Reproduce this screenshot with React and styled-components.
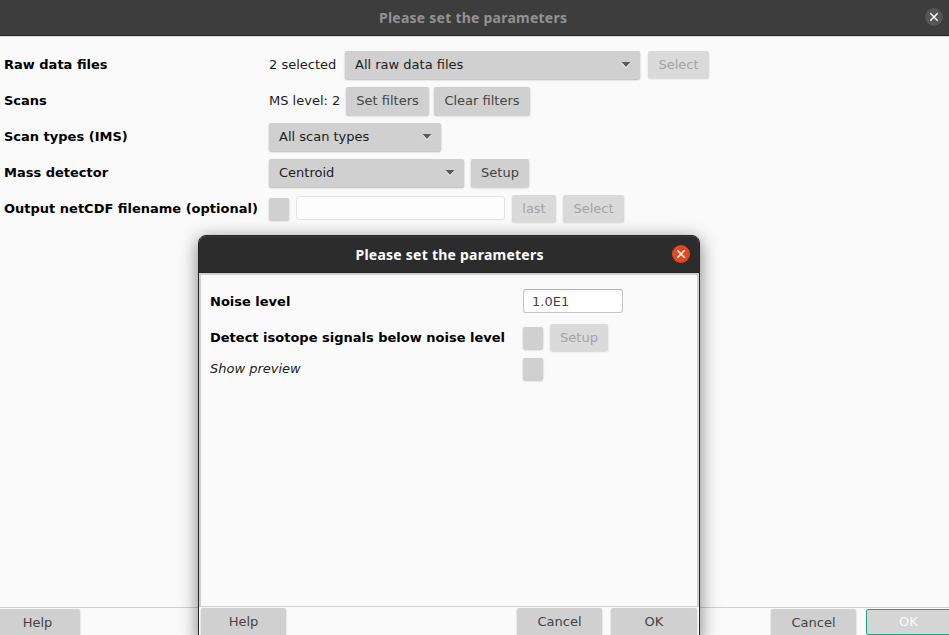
import React from "react";
import styled, { createGlobalStyle } from "styled-components";

const Global = createGlobalStyle`
  * { box-sizing: border-box; }
  html, body { margin: 0; height: 100%; overflow: hidden; }
  body { font: 13px/18px "DejaVu Sans", sans-serif; color: #1c1c1c; background: #fafafa; }
`;

const Window = styled.div`
  position: relative;
  display: flex;
  flex-direction: column;
  width: 949px;
  height: 635px;
  overflow: hidden;
  background: #fafafa;
`;

const TitleBar = styled.header`
  display: grid;
  grid-template-columns: 1fr auto 1fr;
  align-items: center;
  flex: none;
  height: ${(p) => (p.$active ? 37 : 36)}px;
  padding: ${(p) => (p.$active ? "0 9px 0 10px" : "0 6px 1px 3px")};
  background: ${(p) => (p.$active ? "#2c2c2c" : "#3d3d3d")};
  border-bottom: 1px solid #252525;
  box-shadow: ${(p) => (p.$active ? "inset 0 1px #393939" : "0 1px #d8d8d8")};
  border-radius: ${(p) => (p.$active ? "7px 7px 0 0" : "0")};
  color: ${(p) => (p.$active ? "#fff" : "#929292")};
`;

const Title = styled.h1`
  grid-column: 2;
  width: 188px;
  margin: 0;
  padding-top: 1px;
  font: 700 14px/20px "Noto Sans", sans-serif;
  letter-spacing: 0.24px;
  white-space: nowrap;
`;

const CloseButton = styled.button`
  grid-column: 3;
  justify-self: end;
  display: flex;
  align-items: center;
  justify-content: center;
  width: 18px;
  height: 18px;
  padding: 0;
  border: 0;
  border-radius: 50%;
  color: #fff;
  background: ${(p) => (p.$active ? "#e2491b" : "#555")};
`;

const Form = styled.main`
  flex: 1;
  padding: 11px 4px 0;
`;

const Row = styled.div`
  display: grid;
  grid-template-columns: ${(p) => p.$label || 265}px auto;
  align-items: center;
  height: ${(p) => p.$height || 36}px;
`;

const Label = styled.label`
  font-weight: ${(p) => (p.$italic ? 400 : 700)};
  font-style: ${(p) => (p.$italic ? "italic" : "normal")};
  color: ${(p) => (p.$italic ? "#222" : "#000")};
  white-space: nowrap;
`;

const Controls = styled.div`
  display: flex;
  align-items: center;
  gap: ${(p) => p.$gap || 7}px;
`;

const Value = styled.span`
  width: ${(p) => p.$width}px;
  white-space: nowrap;
`;

const Button = styled.button`
  flex: none;
  width: ${(p) => p.$width}px;
  height: ${(p) => (p.disabled ? 27 : 28)}px;
  margin: 0 0 ${(p) => (p.disabled ? 1 : 0)}px;
  padding: 0;
  border: 0;
  border-radius: 2px;
  font: inherit;
  color: ${(p) => (p.disabled ? "#a3a3a3" : "#444")};
  background: ${(p) => (p.disabled ? "#dadada" : "#d0d0d0")};
  box-shadow: 0 1px 2px rgba(0, 0, 0, ${(p) => (p.disabled ? 0.16 : 0.24)});
`;

const FocusedButton = styled(Button)`
  height: 26px;
  color: #fafafa;
  background: #d5d5d5;
  border: 1px solid #1da57f;
  box-shadow: none;
`;

const Dropdown = styled.button`
  display: flex;
  align-items: center;
  justify-content: space-between;
  width: ${(p) => p.$width}px;
  height: 28px;
  padding: 0 9px 0 10px;
  border: 0;
  border-radius: 2px;
  font: inherit;
  color: #1c1c1c;
  background: #d0d0d0;
  box-shadow: 0 1px 2px rgba(0, 0, 0, 0.28);
`;

const Checkbox = styled.span`
  width: 20px;
  height: 22px;
  border-radius: 2px;
  background: #d0d0d0;
  box-shadow: 0 1px 2px rgba(0, 0, 0, 0.24);
`;

const Field = styled.input`
  width: ${(p) => p.$width}px;
  height: 24px;
  margin: 0 0 2px;
  padding: 0 8px;
  border: 1px solid #c4c4c4;
  border-top-color: #b4b4b4;
  border-radius: 3px;
  font: inherit;
  color: #444;
  background: linear-gradient(#f6f6f6, #fff 4px);
  &:disabled { border-color: #e4e4e4; background: #fdfdfd; }
`;

const Footer = styled.footer`
  display: flex;
  flex: none;
  height: 28px;
  padding-top: 1px;
  border-top: 1px solid #cfcfcf;
`;

const Spacer = styled.div`
  flex: 1;
`;

const MainFooter = styled(Footer)`
  width: 956px;
  margin-left: -5px;
`;

const Dialog = styled.section`
  position: absolute;
  left: 198px;
  top: 235px;
  display: flex;
  flex-direction: column;
  width: 502px;
  height: 407px;
  background: #fafafa;
  border-radius: 8px 8px 0 0;
  border: 1px solid #252525;
  box-shadow: 0 4px 18px rgba(0, 0, 0, 0.5);
`;

const DialogForm = styled.div`
  flex: 1;
  padding: 9px 9px 0;
  border: 2px solid #d0d0d0;
  border-bottom: 0;
`;

const DialogFooter = styled(Footer)`
  height: 35px;
  padding: 1px 2px 0;
`;

const OkSlot = styled.div`
  display: flex;
  margin-left: ${(p) => p.$gap}px;
`;

const Arrow = () => (
  <svg width="10" height="6" viewBox="0 0 10 6">
    <path d="M.5 1h9L5 6z" fill="#fff" />
    <path d="M.5 0h9L5 5z" fill="#5a5a5a" />
  </svg>
);

const Cross = () => (
  <svg width="10" height="10" viewBox="0 0 10 10">
    <path d="M1.3 1.3l7.4 7.4M8.7 1.3L1.3 8.7" stroke="currentColor" strokeWidth="1.5" />
  </svg>
);

const TitleRow = ({ active }) => (
  <TitleBar $active={active}>
    <Title>Please set the parameters</Title>
    <CloseButton $active={active} aria-label="Close"><Cross /></CloseButton>
  </TitleBar>
);

export default function App() {
  return (
    <Window>
      <Global />
      <TitleRow />
      <Form>
        <Row>
          <Label>Raw data files</Label>
          <Controls $gap={8}>
            <Value $width={68}>2 selected</Value>
            <Dropdown $width={295}>All raw data files<Arrow /></Dropdown>
            <Button $width={61} disabled>Select</Button>
          </Controls>
        </Row>
        <Row>
          <Label>Scans</Label>
          <Controls $gap={5}>
            <Value $width={72}>MS level: 2</Value>
            <Button $width={83}>Set filters</Button>
            <Button $width={96}>Clear filters</Button>
          </Controls>
        </Row>
        <Row>
          <Label>Scan types (IMS)</Label>
          <Controls><Dropdown $width={172}>All scan types<Arrow /></Dropdown></Controls>
        </Row>
        <Row>
          <Label>Mass detector</Label>
          <Controls>
            <Dropdown $width={195}>Centroid<Arrow /></Dropdown>
            <Button $width={58}>Setup</Button>
          </Controls>
        </Row>
        <Row>
          <Label>Output netCDF filename (optional)</Label>
          <Controls>
            <Checkbox />
            <Field $width={209} disabled />
            <Button $width={44} disabled>last</Button>
            <Button $width={61} disabled>Select</Button>
          </Controls>
        </Row>
      </Form>
      <MainFooter>
        <Button $width={85}>Help</Button>
        <Spacer />
        <Button $width={85}>Cancel</Button>
        <OkSlot $gap={10}><FocusedButton $width={85}>OK</FocusedButton></OkSlot>
      </MainFooter>
      <Dialog>
        <TitleRow active />
        <DialogForm>
          <Row $label={313}>
            <Label>Noise level</Label>
            <Controls><Field $width={100} defaultValue="1.0E1" /></Controls>
          </Row>
          <Row $label={313}>
            <Label>Detect isotope signals below noise level</Label>
            <Controls>
              <Checkbox />
              <Button $width={58} disabled>Setup</Button>
            </Controls>
          </Row>
          <Row $label={313} $height={26}>
            <Label $italic>Show preview</Label>
            <Controls><Checkbox /></Controls>
          </Row>
        </DialogForm>
        <DialogFooter>
          <Button $width={85}>Help</Button>
          <Spacer />
          <Button $width={85}>Cancel</Button>
          <OkSlot $gap={9}><Button $width={86}>OK</Button></OkSlot>
        </DialogFooter>
      </Dialog>
    </Window>
  );
}
